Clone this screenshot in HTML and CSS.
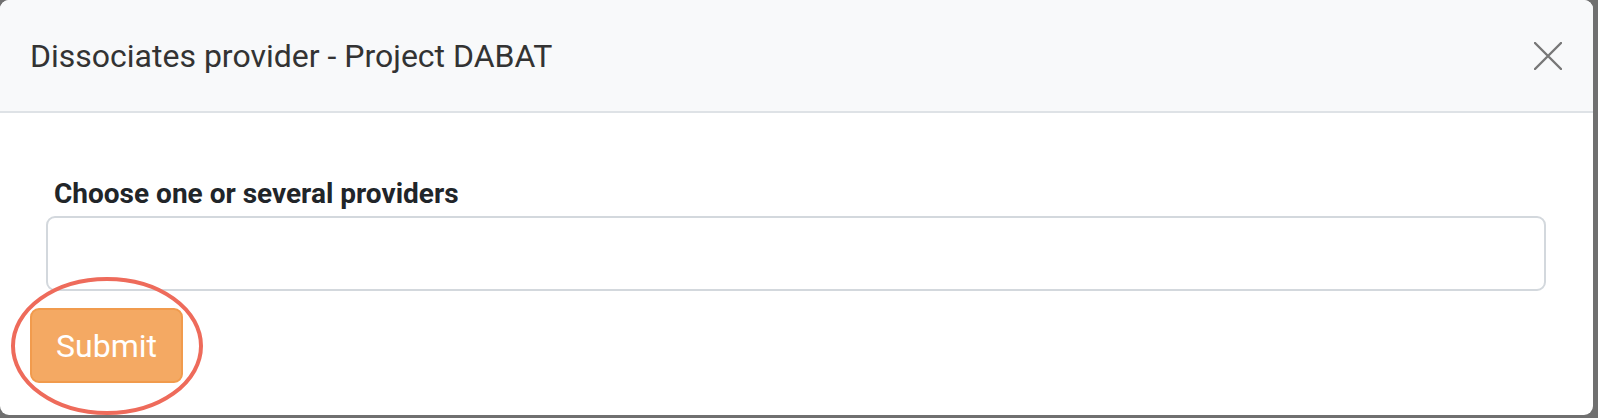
FILE: index.html
```html
<!DOCTYPE html>
<html lang="en">
<head>
<meta charset="utf-8">
<title>Dissociates provider</title>
<link rel="stylesheet" href="styles.css">
</head>
<body>
<div class="modal">
  <div class="modal-header">
    <h5 class="modal-title">Dissociates provider - Project DABAT</h5>
    <button class="close" type="button" aria-label="Close">
      <svg width="28" height="28" viewBox="0 0 28 28"><path d="M1 1L27 27M27 1L1 27" stroke="#777" stroke-width="2.4" stroke-linecap="round" fill="none"/></svg>
    </button>
  </div>
  <div class="modal-body">
    <div class="form-group">
      <label class="form-label">Choose one or several providers</label>
      <div class="select-input"></div>
    </div>
    <button class="btn-submit" type="button">Submit</button>
    <svg class="annotation" width="200" height="146" viewBox="0 0 200 146"><ellipse cx="99" cy="72" rx="94" ry="67" fill="none" stroke="#ee6b5b" stroke-width="4"/></svg>
  </div>
</div>
</body>
</html>
```
FILE: styles.css
```css
html, body {
  margin: 0;
  padding: 0;
}
body {
  background: #707070;
  font-family: Roboto, "Liberation Sans", sans-serif;
  width: 1598px;
  height: 418px;
  overflow: hidden;
}
.modal {
  width: 1593px;
  height: 415px;
  background: #ffffff;
  border-radius: 9px;
  overflow: hidden;
  position: relative;
}
.modal-header {
  box-sizing: border-box;
  height: 113px;
  background: #f8f9fa;
  border-bottom: 2px solid #dee2e6;
  display: flex;
  align-items: center;
  justify-content: space-between;
  padding: 0 31px 0 30px;
}
.modal-title {
  margin: 0;
  font-size: 32px;
  font-weight: 400;
  line-height: 38px;
  color: #333333;
}
.close {
  border: 0;
  background: none;
  padding: 0;
  width: 28px;
  height: 28px;
  display: flex;
}
.modal-body {
  padding: 64px 30px 0 30px;
  position: relative;
}
.form-group {
  padding: 0 17px 0 16px;
}
.form-label {
  display: block;
  padding-left: 8px;
  font-size: 28px;
  font-weight: 700;
  line-height: 34px;
  color: #212529;
  margin-bottom: 5px;
}
.select-input {
  box-sizing: border-box;
  height: 75px;
  border: 2px solid #d3d8dd;
  border-radius: 9px;
  background: #ffffff;
}
.btn-submit {
  box-sizing: border-box;
  margin-top: 17px;
  width: 153px;
  height: 75px;
  background: #f4a963;
  border: 2px solid #f19b4d;
  border-radius: 9px;
  color: #ffffff;
  font-family: Roboto, "Liberation Sans", sans-serif;
  font-size: 32px;
  padding: 0;
}
.annotation {
  position: absolute;
  left: 8px;
  top: 161px;
}
```
